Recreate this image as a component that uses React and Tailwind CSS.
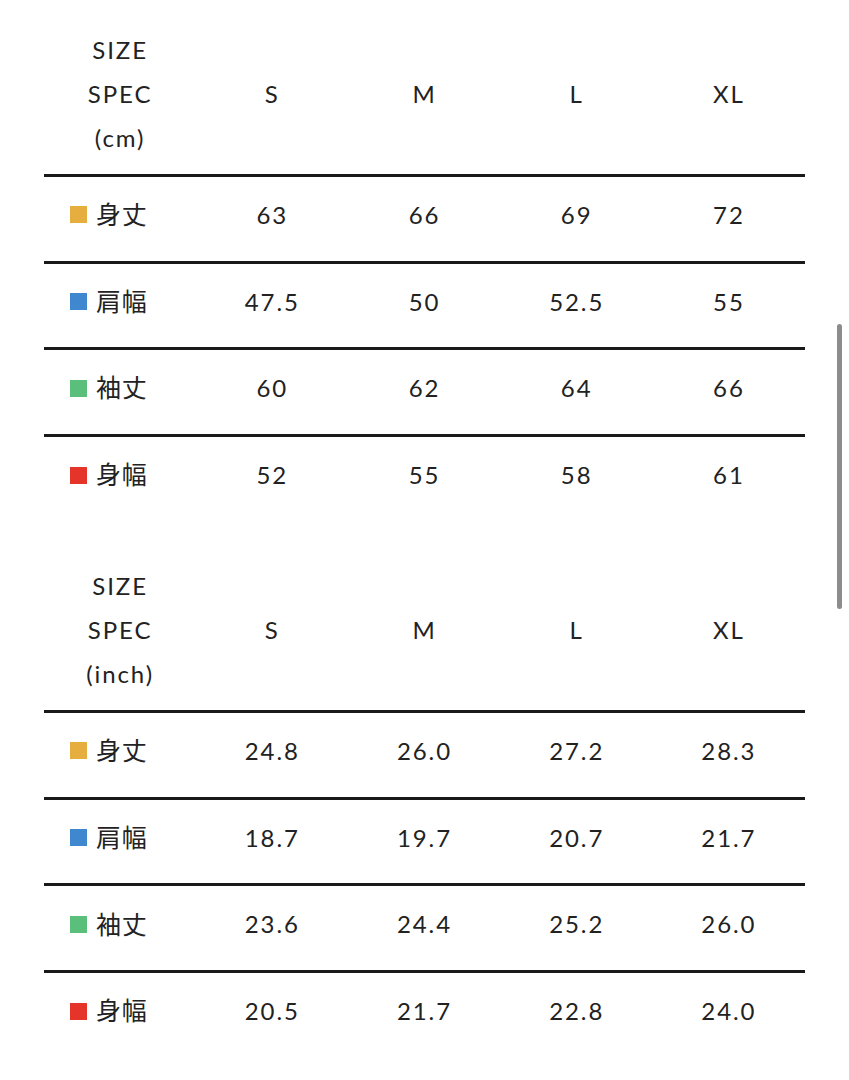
import React from "react";

const colors = {
  "身丈": "bg-[#e5ae3f]",
  "肩幅": "bg-[#3f88d0]",
  "袖丈": "bg-[#5bbf7c]",
  "身幅": "bg-[#e5352b]",
};

const tables = [
  {
    unit: "(cm)",
    rows: [
      ["身丈", "63", "66", "69", "72"],
      ["肩幅", "47.5", "50", "52.5", "55"],
      ["袖丈", "60", "62", "64", "66"],
      ["身幅", "52", "55", "58", "61"],
    ],
  },
  {
    unit: "(inch)",
    rows: [
      ["身丈", "24.8", "26.0", "27.2", "28.3"],
      ["肩幅", "18.7", "19.7", "20.7", "21.7"],
      ["袖丈", "23.6", "24.4", "25.2", "26.0"],
      ["身幅", "20.5", "21.7", "22.8", "24.0"],
    ],
  },
];

function Table({ unit, rows, first }) {
  return (
    <div className={first ? "pt-[28px]" : "pt-[43px]"}>
      <div className="grid grid-cols-5 pb-[14px] border-b-[3px] border-[#1a1a1a] leading-[44px]">
        <div className="flex flex-col items-center">
          <span>SIZE</span>
          <span>SPEC</span>
          <span>{unit}</span>
        </div>
        {["S", "M", "L", "XL"].map((s) => (
          <div key={s} className="flex items-center justify-center pb-[1px]">
            {s}
          </div>
        ))}
      </div>
      {rows.map((r, i) => (
        <div
          key={i}
          className={
            "grid grid-cols-5 items-center pb-[8px] " +
            (i < rows.length - 1 ? "border-b-[3px] border-[#1a1a1a] h-[86.7px]" : "h-[84px]")
          }
        >
          <div className="flex items-center pl-[26px] gap-[9px]">
            <span className={"w-[17px] h-[17px] " + colors[r[0]]}></span>
            <span className="text-[25px] tracking-[0.03em]">{r[0]}</span>
          </div>
          {r.slice(1).map((v, j) => (
            <div key={j} className="text-center">
              {v}
            </div>
          ))}
        </div>
      ))}
    </div>
  );
}

export default function App() {
  return (
    <div
      className="relative w-[850px] h-[1080px] bg-white text-[#222] text-[24px] font-normal tracking-[0.08em] overflow-hidden border-r border-[#d8d8d8]"
      style={{ fontFamily: 'Lato, "Noto Sans CJK JP", sans-serif' }}
    >
      <div className="ml-[44px] w-[761px]">
        {tables.map((t, i) => (
          <Table key={i} unit={t.unit} rows={t.rows} first={i === 0} />
        ))}
      </div>
      <div className="absolute left-[837px] top-[324px] w-[5px] h-[285px] rounded-full bg-[#8c8c8c]"></div>
    </div>
  );
}
